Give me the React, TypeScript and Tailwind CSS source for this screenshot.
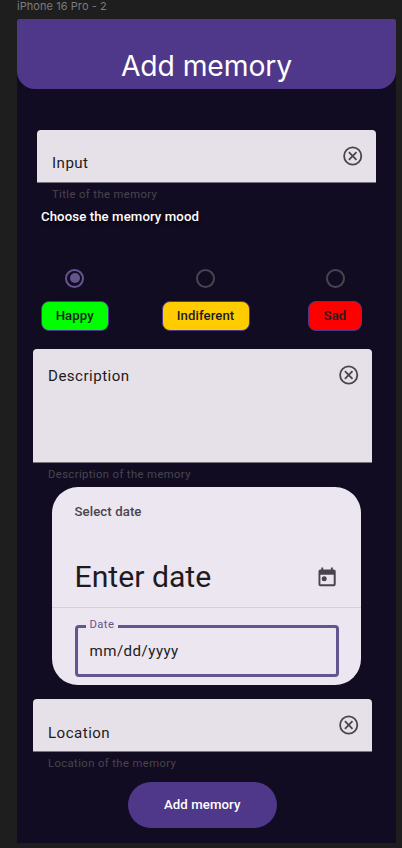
import type { ReactNode } from 'react';

function ClearIcon() {
  return (
    <svg width="20" height="20" viewBox="0 0 20 20" fill="none" stroke="#49454f" strokeWidth="1.8">
      <circle cx="9.7" cy="10" r="8.6" />
      <path d="M5.9 6.2l7.6 7.6M13.5 6.2l-7.6 7.6" />
    </svg>
  );
}

function CalendarIcon() {
  return (
    <svg width="18" height="20" viewBox="0 0 18 20" fill="#49454f">
      <path
        fillRule="evenodd"
        d="M3.3 0.5h1.9v1.9h7.7V0.5h1.9v1.9h1a1.9 1.9 0 0 1 1.9 1.9v13a1.9 1.9 0 0 1-1.9 1.9H2.4a1.9 1.9 0 0 1-1.9-1.9v-13a1.9 1.9 0 0 1 1.9-1.9h.9zM2.4 7.7v9.6h13.3V7.7z"
      />
      <circle cx="6.2" cy="11.7" r="2.5" />
    </svg>
  );
}

function Field({ label, hint, className, labelClass }: { label: string; hint: string; className: string; labelClass: string }) {
  return (
    <div className="w-[338.5px]">
      <div className={`flex justify-between rounded-t-[4px] border-b border-[#79747e] bg-[#e6e0e9] pl-[15px] pr-[13px] ${className}`}>
        <span className={`text-[15.1px] leading-[22px] tracking-[0.47px] text-[#1d1b20] ${labelClass}`}>{label}</span>
        <span className="pt-[16px]">
          <ClearIcon />
        </span>
      </div>
      <p className="pl-[15px] pt-[4px] text-[11.3px] leading-[16px] tracking-[0.38px] text-[#49454f]">{hint}</p>
    </div>
  );
}

function Radio({ checked }: { checked?: boolean }) {
  return (
    <span className={`flex size-[19px] items-center justify-center rounded-full border-2 ${checked ? 'border-[#65558f]' : 'border-[#49454f]'}`}>
      {checked && <span className="size-[9.5px] rounded-full bg-[#65558f]" />}
    </span>
  );
}

function Mood({ children, className, checked }: { children: ReactNode; className: string; checked?: boolean }) {
  return (
    <div className="flex flex-col items-center gap-[13px]">
      <Radio checked={checked} />
      <span className={`flex h-[30px] items-center justify-center rounded-[8px] border border-[#4f378a] text-[13.2px] font-medium tracking-[0.09px] text-[#1d1b20] ${className}`}>
        {children}
      </span>
    </div>
  );
}

export default function App() {
  return (
    <div className="h-[848px] w-[402px] overflow-hidden bg-[#1e1e1e] pl-[17px] font-['Roboto',sans-serif]">
      <div className="h-[19px] font-['Inter',sans-serif] text-[11px] leading-[13px] tracking-[0.06px] text-[#7c7c7c]">iPhone 16 Pro - 2</div>
      <main className="h-[824px] w-[379px] bg-[#120c22]">
        <header className="flex h-[70px] justify-center rounded-b-[18px] rounded-t-[2px] bg-[#4f378a] pt-[27px]">
          <h1 className="font-['Inter',sans-serif] text-[28.3px] font-normal leading-[40px] tracking-[-0.1px] text-white">Add memory</h1>
        </header>

        <div className="pl-[20px] pt-[41px]">
          <Field label="Input" hint="Title of the memory" className="h-[52.5px]" labelClass="pt-[22px]" />
        </div>
        <p className="pl-[24px] pt-[5px] text-[13.2px] font-medium leading-[18px] tracking-[0.09px] text-white [text-shadow:0_3px_3px_rgba(0,0,0,0.6)]">
          Choose the memory mood
        </p>
        <div className="flex pl-[23.5px] pt-[43.1px]">
          <Mood checked className="w-[68.5px] bg-[#00ff00]">Happy</Mood>
          <div className="pl-[52.5px]">
            <Mood className="w-[88px] bg-[#ffcc00]">Indiferent</Mood>
          </div>
          <div className="pl-[58.5px]">
            <Mood className="w-[54px] bg-[#ff0000]">Sad</Mood>
          </div>
        </div>

        <div className="pl-[16px] pt-[18.8px]">
          <Field label="Description" hint="Description of the memory" className="h-[113.7px]" labelClass="pt-[15.5px]" />
        </div>

        <section className="ml-[35px] mt-[4px] h-[197.5px] w-[309px] rounded-[26px] bg-[#ece6f0]">
          <div className="h-[120.5px] border-b border-[#d5cfda] pl-[22.5px] pr-[25px] pt-[16px]">
            <p className="text-[13.2px] font-medium leading-[18px] tracking-[0.09px] text-[#49454f]">Select date</p>
            <div className="flex items-center justify-between pt-[37.3px]">
              <span className="text-[30.2px] leading-[38px] text-[#1d1b20]">Enter date</span>
              <CalendarIcon />
            </div>
          </div>
          <div className="pl-[22.5px] pt-[17.5px]">
            <div className="relative flex h-[52px] w-[264px] items-center rounded-[4px] border-[3px] border-[#65558f] pl-[12px]">
              <span className="absolute -top-[11px] left-[8px] bg-[#ece6f0] px-[4px] text-[11.3px] leading-[16px] tracking-[0.38px] text-[#65558f]">Date</span>
              <span className="text-[15.1px] leading-[22px] tracking-[0.47px] text-[#1d1b20]">mm/dd/yyyy</span>
            </div>
          </div>
        </section>

        <div className="pl-[16px] pt-[14.6px]">
          <Field label="Location" hint="Location of the memory" className="h-[52.5px]" labelClass="pt-[22.5px]" />
        </div>
        <button className="ml-[111px] mt-[10.3px] flex h-[46px] w-[148.5px] items-center justify-center rounded-[23px] bg-[#4f378a] text-[13.2px] font-medium tracking-[0.09px] text-white">
          Add memory
        </button>
      </main>
    </div>
  );
}
